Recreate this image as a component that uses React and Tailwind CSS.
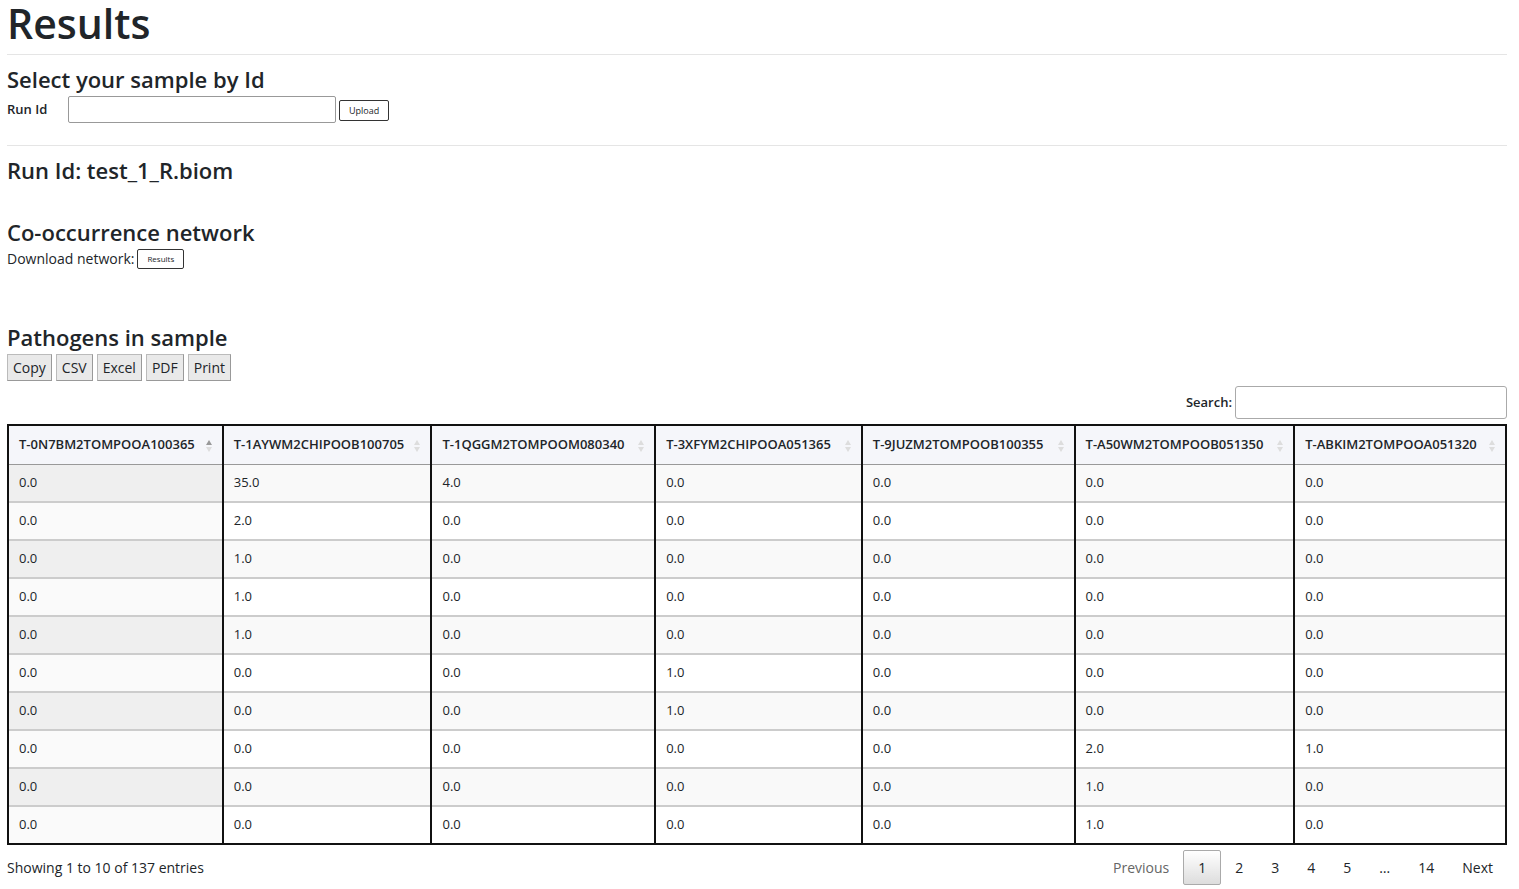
import React from "react";

const heads = ["T-0N7BM2TOMPOOA100365","T-1AYWM2CHIPOOB100705","T-1QGGM2TOMPOOM080340","T-3XFYM2CHIPOOA051365","T-9JUZM2TOMPOOB100355","T-A50WM2TOMPOOB051350","T-ABKIM2TOMPOOA051320"];
const widths = [215,209,224,207,213,220,212];
const rows = [
  ["0.0","35.0","4.0","0.0","0.0","0.0","0.0"],
  ["0.0","2.0","0.0","0.0","0.0","0.0","0.0"],
  ["0.0","1.0","0.0","0.0","0.0","0.0","0.0"],
  ["0.0","1.0","0.0","0.0","0.0","0.0","0.0"],
  ["0.0","1.0","0.0","0.0","0.0","0.0","0.0"],
  ["0.0","0.0","0.0","1.0","0.0","0.0","0.0"],
  ["0.0","0.0","0.0","1.0","0.0","0.0","0.0"],
  ["0.0","0.0","0.0","0.0","0.0","2.0","1.0"],
  ["0.0","0.0","0.0","0.0","0.0","1.0","0.0"],
  ["0.0","0.0","0.0","0.0","0.0","1.0","0.0"],
];

const Sort = ({ active }) => (
  <span className="absolute right-[10px] top-[14px] flex flex-col gap-[2px]">
    <span className={`w-0 h-0 border-x-[3px] border-x-transparent border-b-[5px] ${active ? "border-b-[#999]" : "border-b-[#ddd]"}`} />
    <span className="w-0 h-0 border-x-[3px] border-x-transparent border-t-[5px] border-t-[#ddd]" />
  </span>
);

export default function App() {
  return (
    <div className="pl-[7px] pr-[12px] text-[#212529] bg-white" style={{ fontFamily: "'Open Sans', sans-serif" }}>
      <h1 className="text-[41px] font-semibold leading-[44px] pt-[1px] pb-[9px] border-b border-[#e5e5e5]">Results</h1>
      <h2 className="text-[22px] font-semibold mt-[10px] leading-[28px]">Select your sample by Id</h2>
      <div className="flex items-center mt-[3px] pb-[22px] border-b border-[#e5e5e5]">
        <span className="text-[13px] font-semibold w-[61px]">Run Id</span>
        <input className="w-[268px] h-[27px] border border-[#999] rounded-[2px]" />
        <button className="ml-[3px] mt-[2px] text-[9px] px-[9px] h-[21px] border border-[#333] rounded-[2px] bg-white">Upload</button>
      </div>
      <h2 className="text-[22px] font-semibold mt-[10px] leading-[28px]">Run Id: test_1_R.biom</h2>
      <h2 className="text-[22px] font-semibold mt-[34px] leading-[28px]">Co-occurrence network</h2>
      <div className="flex items-center text-[14px] mt-[2px]">
        Download network:
        <button className="ml-[3px] text-[8px] px-[9px] h-[20px] border border-[#333] rounded-[2px] bg-white">Results</button>
      </div>
      <h2 className="text-[22px] font-semibold mt-[54px] leading-[28px]">Pathogens in sample</h2>
      <div className="flex gap-[4px] mt-[3px]">
        {["Copy","CSV","Excel","PDF","Print"].map(b => (
          <button key={b} className="text-[14px] px-[5px] h-[27px] bg-[#e9e9e9] border border-[#bbb] border-b-[#999] border-r-[#999]">{b}</button>
        ))}
      </div>
      <div className="flex justify-end items-center mt-[5px]">
        <span className="text-[13px] font-semibold mr-[3px]">Search:</span>
        <input className="w-[272px] h-[33px] border border-[#aaa] rounded-[3px]" />
      </div>
      <table className="mt-[5px] border-collapse border-2 border-[#111] text-[13px]" style={{ width: 1500 }}>
        <thead>
          <tr className="bg-[#f5f6fa]">
            {heads.map((h, i) => (
              <th key={h} style={{ width: widths[i] }} className="relative text-left font-semibold h-[39px] px-[10px] border-2 border-[#111] border-b border-b-[#999]">
                {h}<Sort active={i === 0} />
              </th>
            ))}
          </tr>
        </thead>
        <tbody>
          {rows.map((r, ri) => (
            <tr key={ri} className={ri % 2 === 0 ? "bg-[#f9f9f9]" : "bg-white"}>
              {r.map((c, ci) => (
                <td key={ci} className={`h-[38px] px-[10px] border-x-2 border-x-[#111] border-t border-t-[#ccc] ${ri > 0 ? "border-t-2 border-t-[#111]" : ""} ${ci === 0 ? (ri % 2 === 0 ? "bg-[#efefef]" : "bg-[#fafafa]") : ""}`}>{c}</td>
              ))}
            </tr>
          ))}
        </tbody>
      </table>
      <div className="flex justify-between items-center mt-[5px] text-[14px]">
        <span>Showing 1 to 10 of 137 entries</span>
        <div className="flex items-center">
          <span className="px-[14px] text-[#666]">Previous</span>
          <span className="px-[14px] h-[35px] flex items-center border border-[#aaa] rounded-[2px] bg-gradient-to-b from-white to-[#ddd]">1</span>
          {["2","3","4","5","…","14","Next"].map(p => (
            <span key={p} className="px-[14px] h-[35px] flex items-center">{p}</span>
          ))}
        </div>
      </div>
    </div>
  );
}
